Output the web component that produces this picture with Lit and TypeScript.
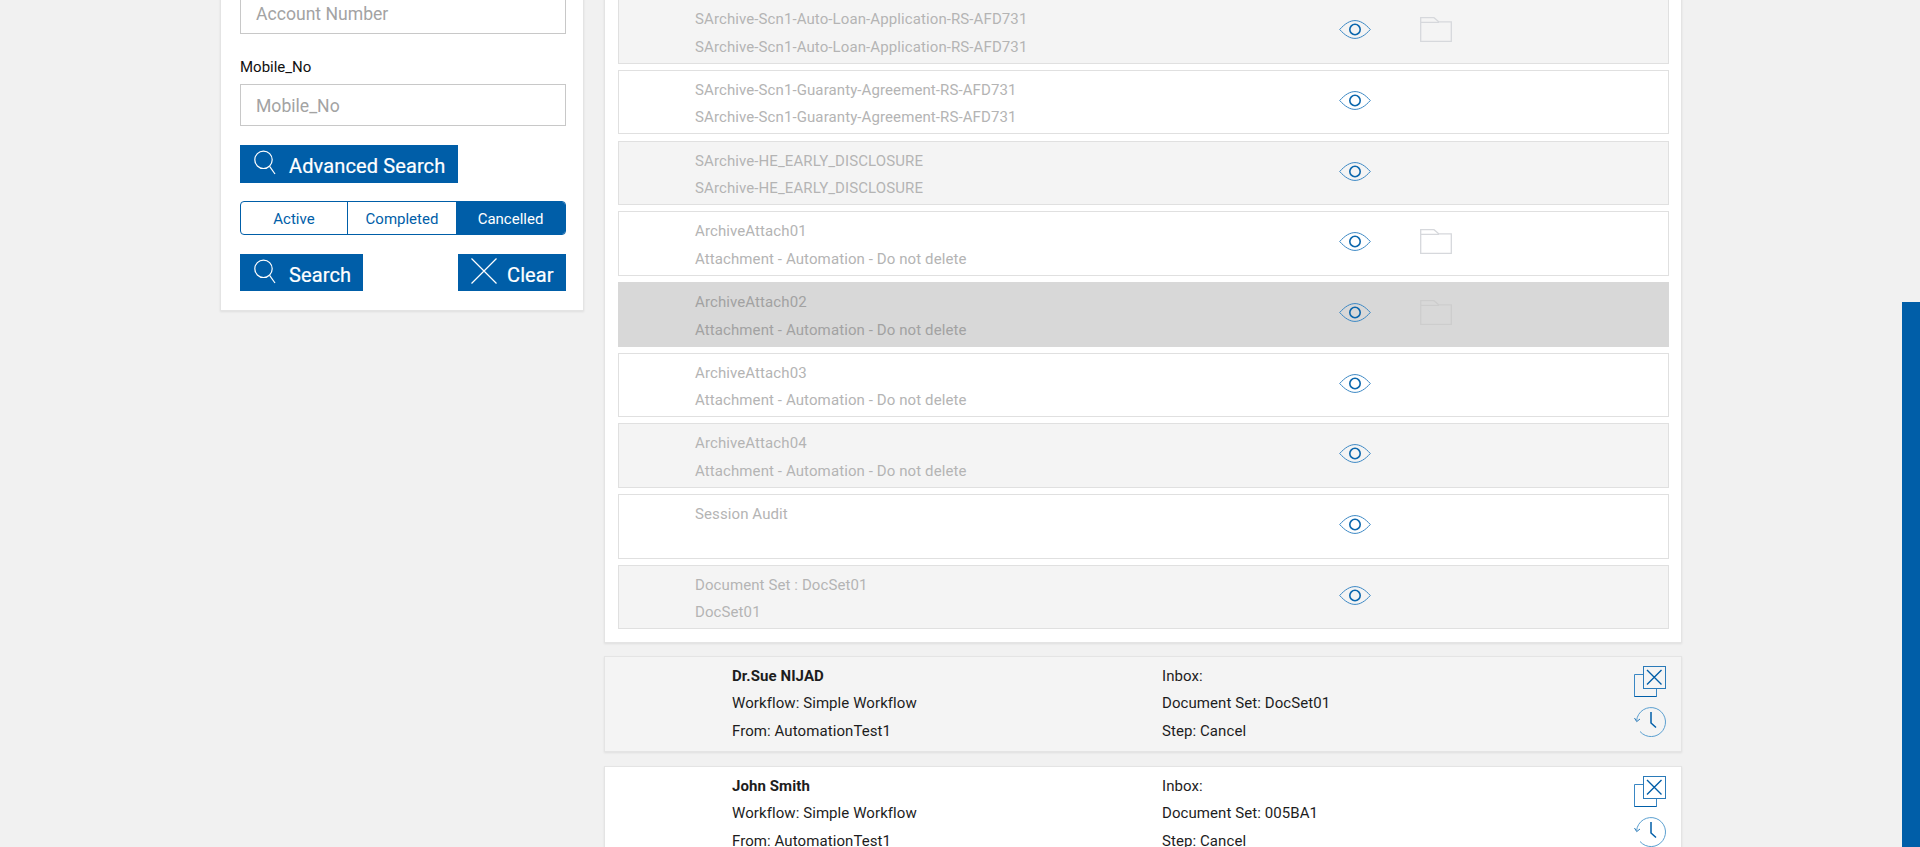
import { LitElement, html, css, svg } from "lit";
import { customElement } from "lit/decorators.js";

const eye = html`<svg class="eye" width="32" height="19" viewBox="0 0 32 19" fill="none"><path d="M.7 9.5C6 3.5 11 .6 16 .6s10 2.9 15.3 8.9C26 15.5 21 18.4 16 18.4S6 15.5.7 9.5Z" stroke="#3a87c4" stroke-width="1"/><circle cx="16" cy="9.5" r="5.2" stroke="#0a66ad" stroke-width="1.6"/></svg>`;
const folder = html`<svg class="folder" width="32" height="25" viewBox="0 0 32 25" fill="none"><path d="M.7 24.3V.7H14l5 4.2h12.3v19.4H.7Z M.7 5.3H19" stroke="currentColor" stroke-width="1.3"/></svg>`;
const search = svg`<circle cx="9.5" cy="10.8" r="8.7" stroke="#fff" stroke-width="1.2" fill="none"/><path d="M15.8 17.6L21 25" stroke="#fff" stroke-width="1.2"/>`;

interface Row { a: string; b: string; folder?: boolean; sel?: boolean; }
const rows: Row[] = [
  { a: "SArchive-Scn1-Auto-Loan-Application-RS-AFD731", b: "SArchive-Scn1-Auto-Loan-Application-RS-AFD731", folder: true },
  { a: "SArchive-Scn1-Guaranty-Agreement-RS-AFD731", b: "SArchive-Scn1-Guaranty-Agreement-RS-AFD731" },
  { a: "SArchive-HE_EARLY_DISCLOSURE", b: "SArchive-HE_EARLY_DISCLOSURE" },
  { a: "ArchiveAttach01", b: "Attachment - Automation - Do not delete", folder: true },
  { a: "ArchiveAttach02", b: "Attachment - Automation - Do not delete", folder: true, sel: true },
  { a: "ArchiveAttach03", b: "Attachment - Automation - Do not delete" },
  { a: "ArchiveAttach04", b: "Attachment - Automation - Do not delete" },
  { a: "Session Audit", b: "" },
  { a: "Document Set : DocSet01", b: "DocSet01" },
];
const tasks = [
  { name: "Dr.Sue NIJAD", set: "DocSet01" },
  { name: "John Smith", set: "005BA1" },
];

@customElement("app-root")
export class AppRoot extends LitElement {
  static styles = css`
    :host { display: block; height: 847px; overflow: hidden; background: #f1f1f1; position: relative;
      font-family: Roboto, "Liberation Sans", sans-serif; }
    .page { display: flex; align-items: flex-start; padding-left: 220px; gap: 20px; }
    .side { width: 364px; margin-top: -40px; height: 350.5px; box-sizing: border-box; background: #fff; padding: 0 17px 0 19px;
      border: 1px solid #e4e4e4; border-top: 0; box-shadow: 0 1px 2px rgba(0,0,0,.08); flex: none; }
    .input { height: 42px; box-sizing: border-box; border: 1px solid #c8c8c8; padding: 1px 0 0 15px; display: flex; align-items: center;
      font-size: 17.6px; color: #a3a3a3; background: #fff; }
    .input.first { height: 73.5px; padding-top: 34px; }
    .label { font-size: 15px; color: #111; line-height: 20px; margin: 23.5px 0 7px; }
    .btn { display: flex; align-items: flex-start; background: #005ea8; color: #fff; font-size: 20px; font-weight: 400; letter-spacing: .12px; height: 37px; box-sizing: border-box; line-height: 37px; -webkit-text-stroke: .2px #fff; }
    .btn svg { flex: none; margin-top: 4px; }
    .btn span { display: block; padding-top: 3px; }
    .adv { margin-top: 19px; width: 218px; height: 38px; padding-left: 14px; gap: 11px; }
    .toggle { display: flex; margin-top: 18px; height: 34px; box-sizing: border-box; border: 1px solid #005ea8; border-radius: 4px; overflow: hidden; font-size: 15px; color: #005ea8; }
    .toggle div { display: flex; align-items: center; justify-content: center; padding-top: 1px; }
    .t1 { width: 107px; box-sizing: border-box; border-right: 1px solid #005ea8; }
    .t2 { width: 108px; }
    .t3 { flex: 1; background: #005ea8; color: #fff; }
    .actions { display: flex; justify-content: space-between; margin-top: 19px; }
    .s { width: 123px; padding-left: 14px; gap: 11px; }
    .c { width: 108px; padding-left: 13px; gap: 10px; }
    .main { width: 1078px; flex: none; margin-top: -10px; }
    .panel { background: #fff; box-sizing: border-box; height: 652.5px; padding: 9.3px 12px 0 13px; border: 1px solid #e4e4e4; border-top: 0; box-shadow: 0 1px 2px rgba(0,0,0,.08); }
    .row { height: 64.5px; box-sizing: border-box; margin-bottom: 6.2px; border: 1px solid #e0e0e0; display: flex; background: #fff; color: #b4b4b4; font-size: 15px; letter-spacing: .1px; }
    .row.alt { background: #f4f4f4; }
    .row.sel { background: #d8d8d8; color: #a2a2a2; border-color: #d8d8d8; }
    .txt { width: 720px; padding-left: 76px; flex: none; box-sizing: border-box; }
    .txt div { height: 27.5px; line-height: 27.5px; white-space: nowrap; }
    .txt div:first-child { margin-top: 6px; }
    .ic { width: 81px; flex: none; }
    .ic .eye { display: block; margin-top: 20px; }
    .ic .folder { display: block; margin-top: 17px; color: #d6d8dc; }
    .row.sel .folder { color: #cdcdcd; }
    .task { margin-top: 13px; height: 96.5px; box-sizing: border-box; border: 1px solid #e4e4e4; background: #fff; display: flex; font-size: 15px; color: #1d1d1d; letter-spacing: .08px; box-shadow: 0 1px 2px rgba(0,0,0,.08); }
    .task.alt { background: #f4f4f4; }
    .task + .task { margin-top: 13.5px; }
    .tc { flex: none; padding-top: 6.4px; }
    .tc div { height: 27.4px; line-height: 27.4px; white-space: nowrap; }
    .t-a { margin-left: 127px; width: 430px; }
    .t-a div:first-child { font-weight: 700; }
    .t-b { width: 472px; }
    .tools { display: flex; flex-direction: column; align-items: flex-start; gap: 10px; padding-top: 9.5px; }
    .bar { position: absolute; left: 1902px; top: 302px; width: 18px; height: 545px; background: #005ea8; }
  `;
  render() {
    return html`
      <div class="page">
        <aside class="side">
          <div class="input first">Account Number</div>
          <div class="label">Mobile_No</div>
          <div class="input">Mobile_No</div>
          <div class="btn adv"><svg width="24" height="26" viewBox="0 0 24 26">${search}</svg><span>Advanced Search</span></div>
          <div class="toggle"><div class="t1">Active</div><div class="t2">Completed</div><div class="t3">Cancelled</div></div>
          <div class="actions">
            <div class="btn s"><svg width="24" height="26" viewBox="0 0 24 26">${search}</svg><span>Search</span></div>
            <div class="btn c"><svg width="26" height="26" viewBox="0 0 26 26"><path d="M.5 .5l25 25M25.5 .5l-25 25" stroke="#fff" stroke-width="1.2"/></svg><span>Clear</span></div>
          </div>
        </aside>
        <main class="main">
          <div class="panel">
            ${rows.map((r, i) => html`
              <div class="row ${i % 2 === 0 ? "alt" : ""} ${r.sel ? "sel" : ""}">
                <div class="txt"><div>${r.a}</div><div>${r.b}</div></div>
                <div class="ic">${eye}</div>
                <div class="ic">${r.folder ? folder : ""}</div>
              </div>`)}
          </div>
          ${tasks.map((t, i) => html`
            <div class="task ${i === 0 ? "alt" : ""}">
              <div class="tc t-a"><div>${t.name}</div><div>Workflow: Simple Workflow</div><div>From: AutomationTest1</div></div>
              <div class="tc t-b"><div>Inbox:</div><div>Document Set: ${t.set}</div><div>Step: Cancel</div></div>
              <div class="tools">
                <svg width="33" height="31" viewBox="0 0 33 31" fill="none"><path d="M9 8.5H.5v22h22v-8" stroke="#3a87c4"/><path d="M.5 30.5h22" stroke="#005ea8"/><rect x="9.5" y="0.5" width="22" height="22" stroke="#2a7ab8"/><path d="M13 4l14.5 14.5M27.5 4L13 18.5" stroke="#005ea8" stroke-width="1.4"/></svg>
                <svg width="33" height="30" viewBox="0 0 33 30" fill="none"><path d="M2.6 13.5A14.5 14.5 0 1 1 6 24.5" stroke="#5a9fd0"/><path d="M.5 11l2.2 3.6L6 12" stroke="#2a7ab8"/><path d="M17 5v11l5 4.5" stroke="#005ea8" stroke-width="1.5"/></svg>
              </div>
            </div>`)}
        </main>
      </div>
      <div class="bar"></div>
    `;
  }
}
